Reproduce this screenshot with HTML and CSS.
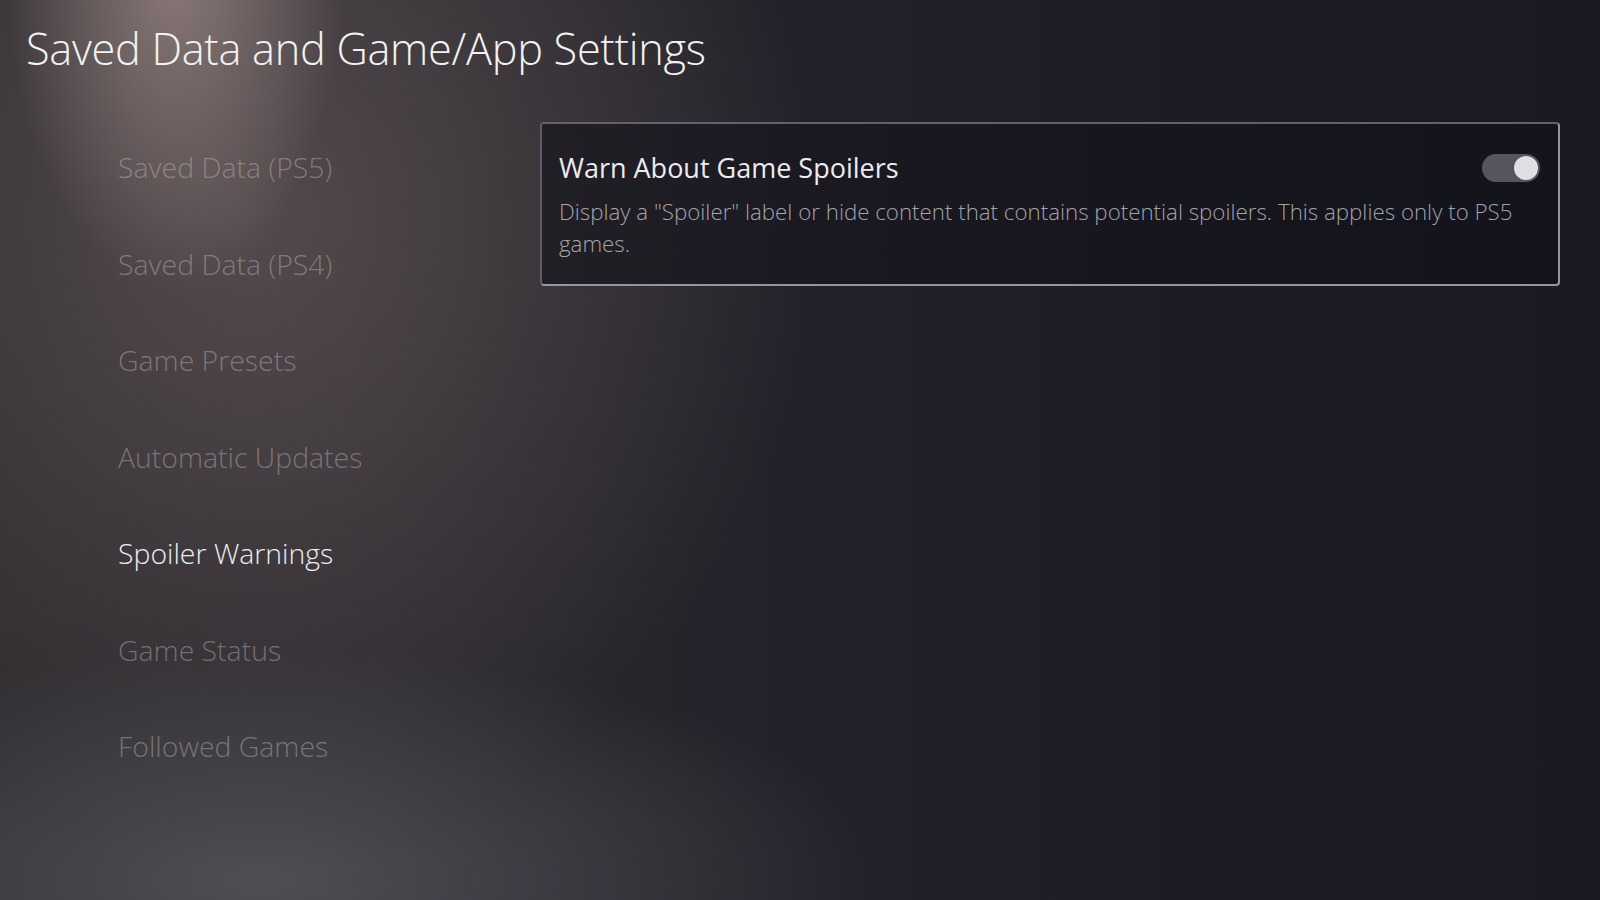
FILE: index.html
```html
<!DOCTYPE html>
<html lang="en">
<head>
    <meta charset="UTF-8">
    <title>Saved Data and Game/App Settings</title>
    <link rel="stylesheet" href="styles.css">
</head>
<body>
    <div class="screen">
        <h1 class="page-title">Saved Data and Game/App Settings</h1>

        <div class="layout">
            <ul class="side-menu">
                <li class="menu-item">Saved Data (PS5)</li>
                <li class="menu-item">Saved Data (PS4)</li>
                <li class="menu-item">Game Presets</li>
                <li class="menu-item">Automatic Updates</li>
                <li class="menu-item active">Spoiler Warnings</li>
                <li class="menu-item">Game Status</li>
                <li class="menu-item">Followed Games</li>
            </ul>

            <div class="content">
                <div class="setting-card">
                    <div class="setting-head">
                        <div class="setting-title">Warn About Game Spoilers</div>
                        <div class="toggle on">
                            <span class="knob"></span>
                        </div>
                    </div>
                    <p class="setting-desc">Display a "Spoiler" label or hide content that contains potential spoilers. This applies only to PS5 games.</p>
                </div>
            </div>
        </div>
    </div>
</body>
</html>
```

FILE: styles.css
```css
* {
    margin: 0;
    padding: 0;
    box-sizing: border-box;
}

html, body {
    height: 100%;
}

body {
    font-family: 'Open Sans', 'Noto Sans', sans-serif;
    color: #e8e8ec;
    overflow: hidden;
    background-color: #1c1c26;
    background-image:
        radial-gradient(ellipse 170px 330px at 175px -40px, rgba(170, 150, 145, 0.7), rgba(170, 150, 145, 0) 100%),
        radial-gradient(ellipse 620px 230px at 260px 880px, rgba(88, 92, 98, 0.75), rgba(88, 92, 98, 0) 100%),
        radial-gradient(ellipse 560px 640px at 250px 220px, rgba(94, 82, 84, 0.8), rgba(94, 82, 84, 0) 100%),
        linear-gradient(90deg, #2c2a2e 0%, #2c2a30 20%, #23222a 50%, #1c1c26 75%, #1a1a24 100%);
}

.screen {
    height: 100%;
    display: flex;
    flex-direction: column;
}

.page-title {
    font-size: 43.3px;
    font-weight: 300;
    line-height: 52px;
    padding: 23px 0 0 26px;
    color: #f2f2f4;
    letter-spacing: -0.3px;
}

.layout {
    display: flex;
    margin-top: 44px;
}

.side-menu {
    list-style: none;
    width: 540px;
    padding-left: 118px;
}

.menu-item {
    height: 96.5px;
    line-height: 96.5px;
    font-size: 28.4px;
    font-weight: 300;
    color: rgba(200, 195, 195, 0.42);
}

.menu-item.active {
    color: #ececf0;
}

.content {
    width: 1020px;
    margin-top: 3px;
}

.setting-card {
    background: linear-gradient(90deg, rgba(26, 24, 32, 0.78), rgba(18, 18, 27, 0.82));
    border: 2px solid #9494a2;
    border-top-color: #62626e;
    border-left-color: #5e5c68;
    border-radius: 4px;
    padding: 26px 18px 24px 17px;
}

.setting-head {
    display: flex;
    align-items: center;
    justify-content: space-between;
}

.setting-title {
    font-size: 27px;
    font-weight: 400;
    line-height: 36px;
    color: #ececf0;
}

.toggle {
    width: 58px;
    height: 28px;
    border-radius: 14px;
    background: #55555f;
    position: relative;
}

.toggle .knob {
    position: absolute;
    top: 2px;
    right: 2px;
    width: 24px;
    height: 24px;
    border-radius: 50%;
    background: #dedee4;
}

.setting-desc {
    margin-top: 10px;
    font-size: 22.3px;
    font-weight: 300;
    line-height: 32px;
    color: rgba(205, 205, 212, 0.78);
    padding-right: 20px;
}
```
